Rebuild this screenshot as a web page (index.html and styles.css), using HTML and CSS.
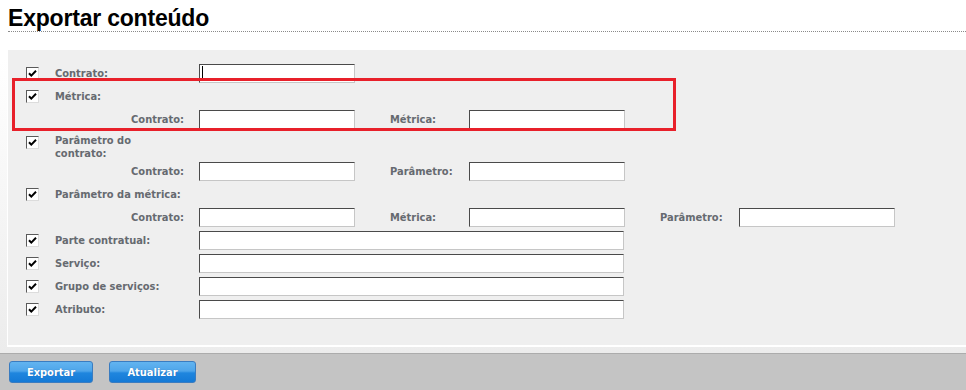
FILE: index.html
```html
<!DOCTYPE html>
<html lang="pt">
<head>
<meta charset="utf-8">
<title>Exportar conteúdo</title>
<link rel="stylesheet" href="styles.css">
</head>
<body>
<div class="page">
  <h1 class="title">Exportar conteúdo</h1>
  <div class="rule"></div>
  <div class="panel">
    <div class="row">
      <span class="cb"><svg viewBox="0 0 11 11" width="11" height="11"><path d="M2 5.2 L4.3 7.6 L9 2.8" fill="none" stroke="#000" stroke-width="2"/></svg></span>
      <label class="lbl">Contrato:</label>
      <span class="caretwrap"><input class="field" type="text"><span class="caret"></span></span>
    </div>
    <div class="row head">
      <span class="cb"><svg viewBox="0 0 11 11" width="11" height="11"><path d="M2 5.2 L4.3 7.6 L9 2.8" fill="none" stroke="#000" stroke-width="2"/></svg></span>
      <label class="lbl">Métrica:</label>
    </div>
    <div class="row sub">
      <label class="sublbl">Contrato:</label>
      <input class="field" type="text">
      <label class="pairlbl">Métrica:</label>
      <input class="field" type="text">
    </div>
    <div class="row head wrap">
      <span class="cb"><svg viewBox="0 0 11 11" width="11" height="11"><path d="M2 5.2 L4.3 7.6 L9 2.8" fill="none" stroke="#000" stroke-width="2"/></svg></span>
      <label class="lbl narrow">Parâmetro do contrato:</label>
    </div>
    <div class="row sub">
      <label class="sublbl">Contrato:</label>
      <input class="field" type="text">
      <label class="pairlbl">Parâmetro:</label>
      <input class="field" type="text">
    </div>
    <div class="row head">
      <span class="cb"><svg viewBox="0 0 11 11" width="11" height="11"><path d="M2 5.2 L4.3 7.6 L9 2.8" fill="none" stroke="#000" stroke-width="2"/></svg></span>
      <label class="lbl wide">Parâmetro da métrica:</label>
    </div>
    <div class="row sub">
      <label class="sublbl">Contrato:</label>
      <input class="field" type="text">
      <label class="pairlbl">Métrica:</label>
      <input class="field" type="text">
      <label class="pairlbl">Parâmetro:</label>
      <input class="field" type="text">
    </div>
    <div class="row">
      <span class="cb"><svg viewBox="0 0 11 11" width="11" height="11"><path d="M2 5.2 L4.3 7.6 L9 2.8" fill="none" stroke="#000" stroke-width="2"/></svg></span>
      <label class="lbl">Parte contratual:</label>
      <input class="field long" type="text">
    </div>
    <div class="row">
      <span class="cb"><svg viewBox="0 0 11 11" width="11" height="11"><path d="M2 5.2 L4.3 7.6 L9 2.8" fill="none" stroke="#000" stroke-width="2"/></svg></span>
      <label class="lbl">Serviço:</label>
      <input class="field long" type="text">
    </div>
    <div class="row">
      <span class="cb"><svg viewBox="0 0 11 11" width="11" height="11"><path d="M2 5.2 L4.3 7.6 L9 2.8" fill="none" stroke="#000" stroke-width="2"/></svg></span>
      <label class="lbl">Grupo de serviços:</label>
      <input class="field long" type="text">
    </div>
    <div class="row">
      <span class="cb"><svg viewBox="0 0 11 11" width="11" height="11"><path d="M2 5.2 L4.3 7.6 L9 2.8" fill="none" stroke="#000" stroke-width="2"/></svg></span>
      <label class="lbl">Atributo:</label>
      <input class="field long" type="text">
    </div>
    <div class="highlight"></div>
  </div>
  <div class="band"></div>
</div>
<div class="footer">
  <button class="btn btn-export" type="button">Exportar</button>
  <button class="btn btn-update" type="button">Atualizar</button>
</div>
</body>
</html>
```
FILE: styles.css
```css
html, body {
  margin: 0;
  padding: 0;
}
body {
  width: 966px;
  height: 390px;
  overflow: hidden;
  background: linear-gradient(to bottom, #ffffff 0px, #ffffff 60px, #ececec 353px);
  font-family: "DejaVu Sans Condensed", "Liberation Sans", sans-serif;
}
.page {
  padding-left: 7px;
}
.title {
  margin: 0;
  padding: 5px 0 0 1px;
  height: 26px;
  font-family: "Liberation Sans", Arial, sans-serif;
  font-weight: bold;
  font-size: 23px;
  line-height: 26px;
  color: #000;
  letter-spacing: -0.2px;
}
.rule {
  margin-left: 1px;
  border-top: 1px dotted #8a8a8a;
  height: 0;
}
.panel {
  position: relative;
  margin-top: 18px;
  background: #efefef;
  border-left: 1px solid #fff;
  border-bottom: 2px solid #fff;
  padding: 12px 0 24px 18px;
  height: 259px;
}
.row {
  display: flex;
  align-items: center;
  height: 23px;
}
.row.wrap {
  height: 29px;
  align-items: flex-start;
}
.cb {
  box-sizing: border-box;
  width: 13px;
  height: 13px;
  background: #fff;
  border-style: solid;
  border-width: 1px;
  border-color: #5a5a5a #dcdcdc #dcdcdc #5a5a5a;
  display: flex;
  align-items: center;
  justify-content: center;
  flex: none;
}
.cb svg { display: block; }
.row.wrap .cb { margin-top: 5px; }
.lbl, .sublbl, .pairlbl {
  font-size: 11px;
  font-weight: bold;
  color: #666a70;
  line-height: 13px;
}
.lbl {
  margin-left: 16px;
  width: 144px;
  flex: none;
}
.lbl.narrow {
  width: 90px;
  margin-top: 3px;
}
.lbl.wide { width: 160px; }
.sublbl {
  width: 158px;
  padding-right: 15px;
  text-align: right;
  flex: none;
}
.pairlbl {
  margin-left: 35px;
  width: 79px;
  flex: none;
}
.field {
  box-sizing: border-box;
  width: 156px;
  height: 19px;
  margin: 0;
  padding: 0 2px;
  background: #fff;
  border-style: solid;
  border-width: 1px;
  border-color: #4a4a4a #c6c6c6 #c6c6c6 #4a4a4a;
  border-radius: 0;
  outline: none;
  flex: none;
}
.field.long { width: 425px; }
.caretwrap {
  position: relative;
  display: flex;
}
.caret {
  position: absolute;
  left: 3px;
  top: 2px;
  width: 1px;
  height: 15px;
  background: #000;
}
.highlight {
  position: absolute;
  left: 4px;
  top: 28px;
  width: 664px;
  height: 53px;
  border: 3px solid #e8202a;
  box-sizing: border-box;
  pointer-events: none;
}
.band {
  height: 6px;
}
.footer {
  border-top: 1px solid #acacac;
  background: #c4c4c4;
  height: 37px;
  padding: 7px 0 0 9px;
  box-sizing: border-box;
  display: flex;
  gap: 16px;
}
.btn {
  height: 22px;
  margin: 0;
  padding: 0;
  border: 1px solid #3a7cc0;
  border-radius: 3px;
  background: linear-gradient(to bottom, #62b4f0 0%, #4ea5ea 45%, #1f86de 55%, #1479d6 100%);
  color: #fff;
  font-family: "DejaVu Sans Condensed", "Liberation Sans", sans-serif;
  font-weight: bold;
  font-size: 11px;
  text-shadow: 0 0 1px rgba(0,40,100,0.4);
}
.btn-export { width: 84px; }
.btn-update { width: 87px; }
```
